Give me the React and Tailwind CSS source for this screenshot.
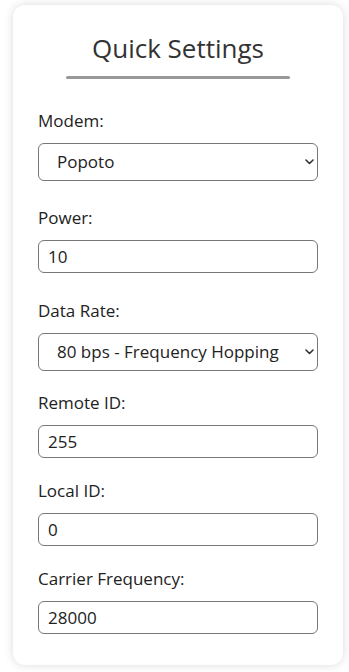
import React from "react";

const Chevron = () => (
  <svg className="pointer-events-none absolute right-[4px] top-1/2 -translate-y-1/2" width="9" height="6" viewBox="0 0 9 6" fill="none">
    <path d="M1 1l3.5 3.5L8 1" stroke="#333" strokeWidth="1.6" strokeLinecap="round" strokeLinejoin="round" />
  </svg>
);

const SelectField = ({ label, value, options, className }) => (
  <div className={"flex flex-col " + className}>
    <label className="text-[17px] text-[#222] leading-[20px] mb-[12px]">{label}</label>
    <div className="relative">
      <select
        defaultValue={value}
        className="w-full h-[38px] appearance-none rounded-[6px] border border-[#777] bg-white pl-[18px] pr-6 text-[17px] text-[#222] outline-none"
        style={{ fontFamily: "inherit" }}
      >
        {options.map((o) => (
          <option key={o}>{o}</option>
        ))}
      </select>
      <Chevron />
    </div>
  </div>
);

const InputField = ({ label, value, className }) => (
  <div className={"flex flex-col " + className}>
    <label className="text-[17px] text-[#222] leading-[20px] mb-[12px]">{label}</label>
    <input
      defaultValue={value}
      className="w-full h-[33px] rounded-[6px] border border-[#777] bg-white px-[9px] text-[17px] text-[#222] outline-none"
    />
  </div>
);

export default function App() {
  return (
    <div className="min-h-screen bg-white pt-[5px] px-[6px]" style={{ fontFamily: "'Open Sans', sans-serif" }}>
      <div className="ml-[7px] w-[330px] h-[660px] rounded-[12px] bg-white shadow-[0_0_10px_rgba(0,0,0,0.15)] px-[25px]">
        <h1 className="pt-[27px] text-center text-[26px] leading-[32px] text-[#333]">Quick Settings</h1>
        <div className="mx-auto mt-[12px] h-[3px] w-[224px] rounded-full bg-[#999]" />
        <div className="mt-[32px] flex flex-col">
          <SelectField label="Modem:" value="Popoto" options={["Popoto"]} className="" />
          <InputField label="Power:" value="10" className="mt-[27px]" />
          <SelectField label="Data Rate:" value="80 bps - Frequency Hopping" options={["80 bps - Frequency Hopping"]} className="mt-[28px]" />
          <InputField label="Remote ID:" value="255" className="mt-[22px]" />
          <InputField label="Local ID:" value="0" className="mt-[23px]" />
          <InputField label="Carrier Frequency:" value="28000" className="mt-[23px]" />
        </div>
      </div>
    </div>
  );
}
